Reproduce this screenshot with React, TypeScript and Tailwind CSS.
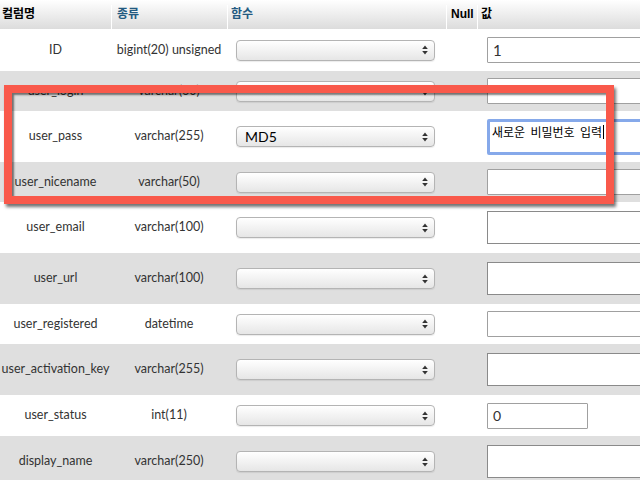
import React from "react";

type Row = {
  name: string;
  type: string;
  fn?: string;
  value?: string;
  field: "input" | "short" | "textarea" | "focus";
  height: string;
  gray: boolean;
};

const rows: Row[] = [
  { name: "ID", type: "bigint(20) unsigned", field: "input", value: "1", height: "h-[42px]", gray: false },
  { name: "user_login", type: "varchar(60)", field: "input", height: "h-[40px]", gray: true },
  { name: "user_pass", type: "varchar(255)", fn: "MD5", field: "focus", value: "새로운  비밀번호  입력", height: "h-[51px]", gray: false },
  { name: "user_nicename", type: "varchar(50)", field: "input", height: "h-[40px]", gray: true },
  { name: "user_email", type: "varchar(100)", field: "textarea", height: "h-[51px]", gray: false },
  { name: "user_url", type: "varchar(100)", field: "textarea", height: "h-[51px]", gray: true },
  { name: "user_registered", type: "datetime", field: "input", height: "h-[40px]", gray: false },
  { name: "user_activation_key", type: "varchar(255)", field: "textarea", height: "h-[51px]", gray: true },
  { name: "user_status", type: "int(11)", field: "short", value: "0", height: "h-[41px]", gray: false },
  { name: "display_name", type: "varchar(250)", field: "textarea", height: "h-[51px]", gray: true },
];

const SelectArrows = () => (
  <svg width="6" height="10" viewBox="0 0 6 10" className="absolute right-[6px] top-1/2 -translate-y-1/2">
    <path d="M3 0.5 L5.8 4 L0.2 4 Z" fill="#333" />
    <path d="M3 9.5 L5.8 6 L0.2 6 Z" fill="#333" />
  </svg>
);

const FakeSelect = ({ value }: { value?: string }) => (
  <div className="relative w-[199px] h-[21px] rounded-[4px] border border-[#b4b4b4] bg-gradient-to-b from-white to-[#e6e6e6] shadow-[0_1px_1px_rgba(0,0,0,0.08)] flex items-center pl-[8px] text-[14px] text-black">
    {value}
    <SelectArrows />
  </div>
);

const ValueField = ({ row }: { row: Row }) => {
  if (row.field === "focus") {
    return (
      <div className="w-[200px] h-[36px] rounded-[2px] border-[3px] border-[#86a9ea] bg-white pl-[2px] pt-[3px] text-[12px] leading-[14px] text-black whitespace-pre flex items-start [font-family:'Noto_Sans_CJK_KR',sans-serif]">
        {row.value}
        <span className="inline-block w-px h-[14px] bg-black ml-px" />
      </div>
    );
  }
  if (row.field === "textarea") {
    return <div className="w-[200px] h-[33px] border border-[#8a8a8a] bg-white" />;
  }
  if (row.field === "short") {
    return (
      <div className="w-[101px] h-[26px] border border-[#a0a0a0] rounded-[1px] bg-white flex items-center pl-[5px] text-[14px] text-[#333]">
        {row.value}
      </div>
    );
  }
  return (
    <div className="w-[200px] h-[26px] border border-[#a0a0a0] rounded-[1px] bg-white flex items-center pl-[5px] text-[15px] text-[#333]">
      {row.value}
    </div>
  );
};

export default function App() {
  return (
    <div className="relative w-[640px] h-[480px] overflow-hidden bg-white [font-family:Lato,'Liberation_Sans',sans-serif] text-[12.5px] text-[#333]">
      {/* header */}
      <div className="flex h-[29px] bg-gradient-to-b from-white to-[#dcdcdc] text-[12px] font-bold items-end pb-[6px] [font-family:'Liberation_Sans','Noto_Sans_CJK_KR',sans-serif]">
        <div className="w-[111px] shrink-0 pl-[2px] text-black">컬럼명</div>
        <div className="w-[116px] shrink-0 pl-[5px] text-[#235a81] border-l border-white -mb-[6px] pb-[6px]">종류</div>
        <div className="w-[219px] shrink-0 pl-[3px] text-[#235a81] border-l border-white -mb-[6px] pb-[6px]">함수</div>
        <div className="w-[31px] shrink-0 pl-[4px] text-black border-l border-white -mb-[6px] pb-[6px]">Null</div>
        <div className="flex-1 pl-[3px] text-black border-l border-white -mb-[6px] pb-[6px]">값</div>
      </div>

      {rows.map((row) => (
        <div
          key={row.name}
          className={`flex items-center ${row.height} ${row.gray ? "bg-[#dfdfdf]" : "bg-white"}`}
        >
          <div className="w-[111px] shrink-0 text-center">{row.name}</div>
          <div className="w-[116px] shrink-0 text-center">{row.type}</div>
          <div className="w-[219px] shrink-0 pl-[9px]">
            <FakeSelect value={row.fn} />
          </div>
          <div className="w-[31px] shrink-0" />
          <div className="flex-1 pl-[10px]">
            <ValueField row={row} />
          </div>
        </div>
      ))}

      {/* highlight box */}
      <div className="absolute left-[4px] top-[85px] w-[610px] h-[119px] border-[8px] border-[#f9594b] shadow-[2px_3px_3px_rgba(0,0,0,0.55),inset_2px_2px_2px_rgba(0,0,0,0.5)]" />
    </div>
  );
}
